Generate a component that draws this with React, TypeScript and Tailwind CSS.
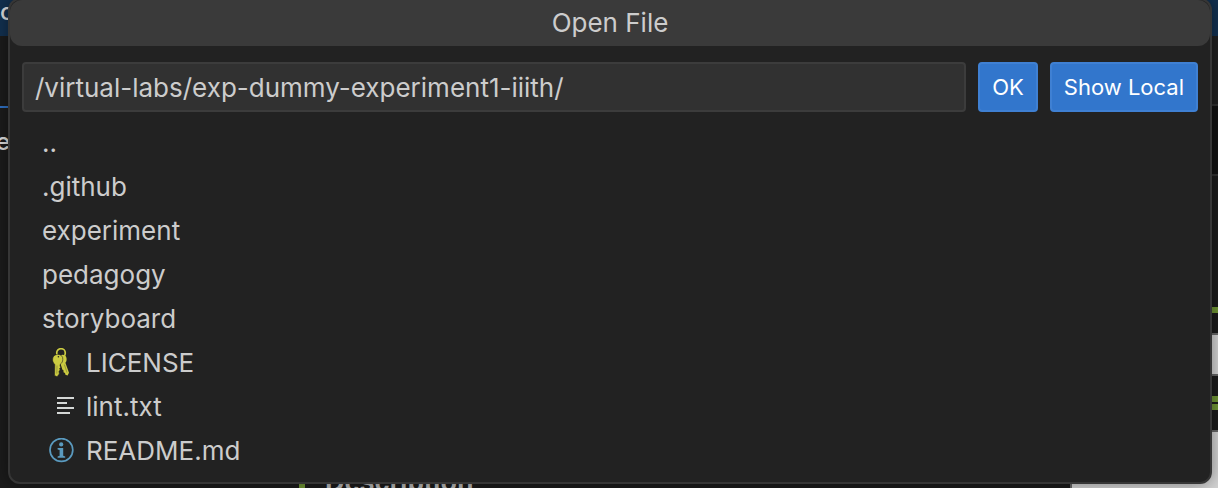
import React from "react";

const folders = ["..", ".github", "experiment", "pedagogy", "storyboard"];

function KeysIcon() {
  return (
    <svg viewBox="0 0 18 30" className="h-[30px] w-[18px]" aria-hidden="true">
      <circle cx="9" cy="5" r="4.3" fill="none" stroke="#cbcb41" strokeWidth="1.7" />
      <path
        d="M8.5 7.4 C10.5 5.9 14 6.9 14.5 9.9 C14.9 12.2 14.3 13.7 13.4 14.8 L17 24.8 L15.6 27.4 L13.4 26.8 L13 25 L11.5 24.2 L11.6 22.4 L10.3 21.4 L8.5 15.6 Z"
        fill="#cbcb41"
      />
      <path
        d="M5.4 6.4 C9 6.2 11 8.4 10.8 11.4 C10.7 13.6 9.8 15.2 8.3 16.2 L8 18 L8.8 19.2 L7.6 20.4 L8.2 22 L7 23.2 L7.3 26 L5 28.8 L2.5 27.4 L2.8 16.4 C1.2 15.2 .4 13.2 .6 11 C.8 8.2 2.8 6.6 5.4 6.4 Z"
        fill="#cbcb41"
        stroke="#222222"
        strokeWidth="0.6"
      />
      <path d="M5 17.5 L4.8 25.6 M12.4 16.6 L15 24.6" stroke="#77772f" strokeWidth="0.6" fill="none" />
      <circle cx="6.4" cy="8.8" r="0.8" fill="#222222" />
    </svg>
  );
}

function TextIcon() {
  return (
    <svg viewBox="0 0 18 20" className="h-5 w-[18px]" aria-hidden="true">
      <path d="M1 0h17v2H1zM1 5h10v2H1zM1 10h17v2H1zM1 15h13v2H1z" fill="#d4d7d6" />
    </svg>
  );
}

function InfoIcon() {
  return (
    <svg viewBox="0 0 26 26" className="size-[26px]" aria-hidden="true">
      <circle cx="13.4" cy="12" r="11.4" fill="none" stroke="#5a9abf" strokeWidth="1.7" />
      <circle cx="13.2" cy="6.4" r="2.1" fill="#5a9abf" />
      <path d="M9.6 10h5.6v7.8l2 .6v1.3H9.6v-1.3l2-.6V12l-2-.5z" fill="#5a9abf" />
    </svg>
  );
}

const files = [
  { name: "LICENSE", icon: <KeysIcon />, pad: "pl-2.5" },
  { name: "lint.txt", icon: <TextIcon />, pad: "pl-3.5" },
  { name: "README.md", icon: <InfoIcon />, pad: "pl-1.5" },
];

function Workspace() {
  return (
    <div aria-hidden="true" className="absolute inset-0 flex flex-col overflow-hidden bg-[#1b1b1b] text-[#d8d8d8]">
      <div className="h-9 shrink-0 bg-[#12304f] text-2xl leading-6 font-medium">c</div>
      <div className="flex min-h-0 grow">
        <div className="flex grow flex-col">
          <div className="h-[72px] w-2 shrink-0 border-b-2 border-[#2f6fc0]" />
          <div className="-ml-1 h-[376px] shrink-0 pt-[18px] text-2xl font-medium">e</div>
        </div>
        <div className="flex w-[148px] shrink-0 flex-col">
          <div className="h-[70px] shrink-0 border-b-2 border-[#303030] bg-[#1f1f1f]" />
          <div className="h-[70px] shrink-0 border-b-2 border-[#303030] bg-[#121212]" />
          <div className="h-[131px] shrink-0" />
          <div className="h-1.5 shrink-0 bg-[#6f9434]" />
          <div className="h-5 shrink-0" />
          <div className="h-[43px] shrink-0 border-2 border-r-0 border-[#666666] bg-[#d2d2d2]" />
          <div className="h-5 shrink-0" />
          <div className="h-1.5 shrink-0 bg-[#6f9434]" />
          <div className="h-0.5 shrink-0" />
          <div className="h-1.5 shrink-0 bg-[#6f9434]" />
          <div className="h-5 shrink-0" />
          <div className="grow border-t-2 border-l-2 border-[#666666] bg-[#d2d2d2]" />
        </div>
      </div>
      <div className="absolute bottom-[-10px] left-[299px] border-l-[6px] border-[#6f9434] pl-5 font-['Liberation_Sans',sans-serif] text-[27px] leading-8 font-bold text-[#b5b5b5]">
        Description
      </div>
    </div>
  );
}

export default function App() {
  return (
    <div className="relative overflow-hidden pb-1 font-['Inter','Liberation_Sans',sans-serif]">
      <Workspace />
      <section
        role="dialog"
        aria-labelledby="dialog-title"
        className="relative -mt-0.5 mr-1.5 ml-2 rounded-xl border-2 border-[#363636] bg-[#222222] text-[#cccccc] shadow-[0_0_16px_rgba(0,0,0,0.4)]"
      >
        <h1 id="dialog-title" className="h-[46px] rounded-xl bg-[#3a3a3a] text-center text-[26px] leading-[46px]">
          Open File
        </h1>
        <form className="flex gap-3 px-3 pt-4" onSubmit={(e) => e.preventDefault()}>
          <input
            aria-label="File path"
            defaultValue="/virtual-labs/exp-dummy-experiment1-iiith/"
            className="h-[50px] min-w-0 grow rounded border-2 border-[#3c3c3c] bg-[#313131] px-[11px] text-[26px] outline-none"
          />
          <button type="submit" className="h-[50px] shrink-0 rounded border-2 border-[#3f80d3] bg-[#3276cc] px-3 text-[22px] text-white">
            OK
          </button>
          <button type="button" className="h-[50px] shrink-0 rounded border-2 border-[#3f80d3] bg-[#3276cc] px-3 text-[22px] text-white">
            Show Local
          </button>
        </form>
        <ul className="px-8 py-[9px] text-[26px] leading-[44px]">
          {folders.map((name) => (
            <li key={name} className="h-11">{name}</li>
          ))}
          {files.map((file) => (
            <li key={file.name} className="flex h-11 items-center">
              <span className={`flex w-11 shrink-0 ${file.pad}`}>{file.icon}</span>
              {file.name}
            </li>
          ))}
        </ul>
      </section>
    </div>
  );
}
